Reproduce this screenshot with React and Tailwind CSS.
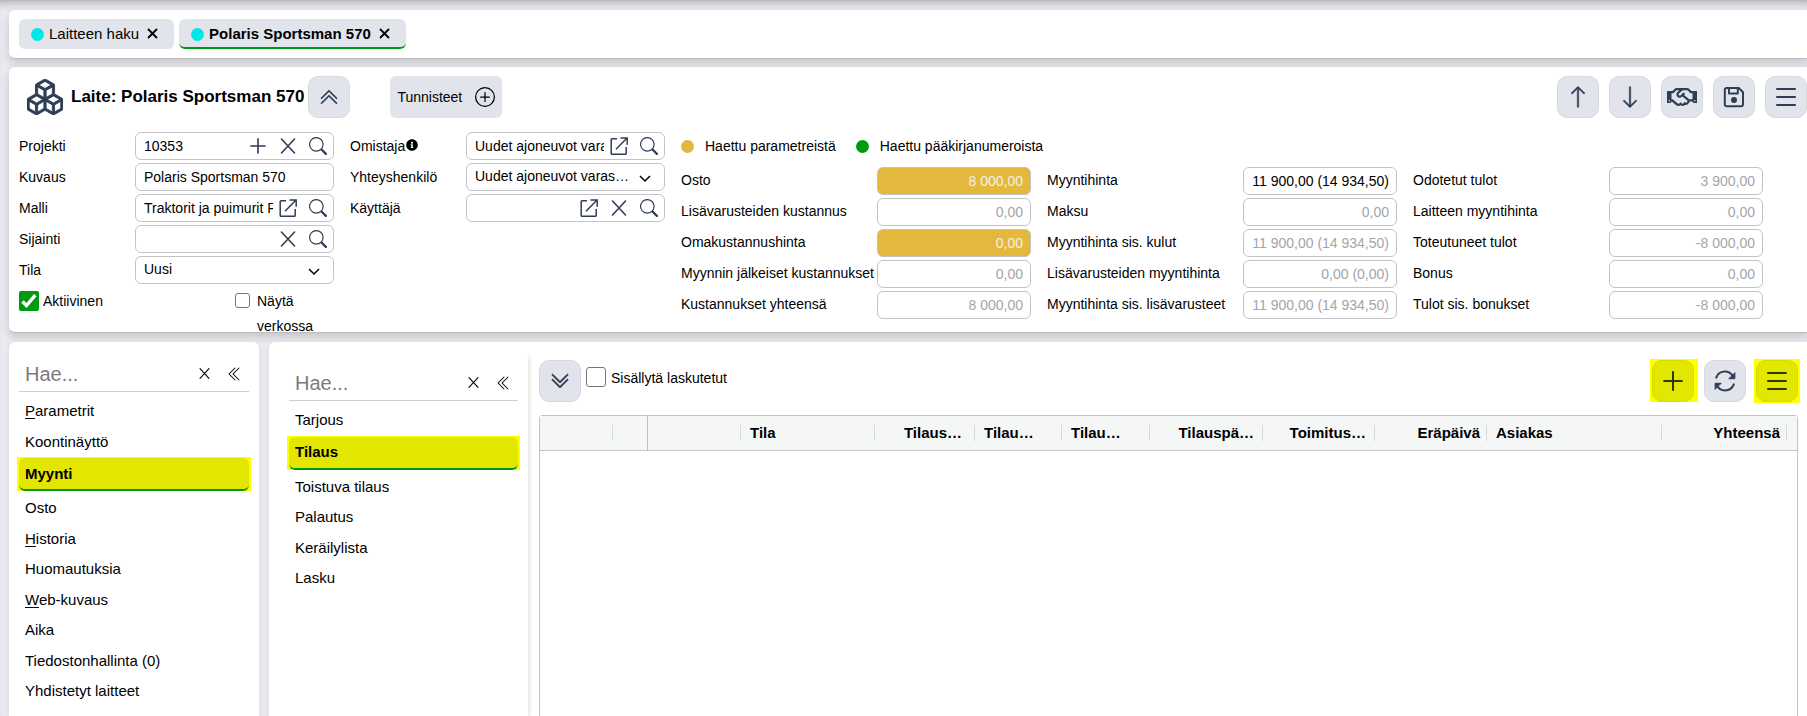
import { useId, useState } from 'react';
import {
  BsBoxes,
  BsChevronDoubleUp,
  BsChevronDoubleDown,
  BsChevronDoubleLeft,
  BsPlusCircle,
  BsArrowUp,
  BsArrowDown,
  BsSearch,
} from 'react-icons/bs';
import { FaInfoCircle, FaRegHandshake } from 'react-icons/fa';

const KUSTANNUKSET = [
  { nimi: 'Osto', arvo: '8 000,00', tyyli: 'parametri' },
  { nimi: 'Lisävarusteiden kustannus', arvo: '0,00' },
  { nimi: 'Omakustannushinta', arvo: '0,00', tyyli: 'parametri' },
  { nimi: 'Myynnin jälkeiset kustannukset', arvo: '0,00' },
  { nimi: 'Kustannukset yhteensä', arvo: '8 000,00' },
];

const MYYNTIHINNAT = [
  { nimi: 'Myyntihinta', arvo: '11 900,00 (14 934,50)', tyyli: 'muokattava' },
  { nimi: 'Maksu', arvo: '0,00' },
  { nimi: 'Myyntihinta sis. kulut', arvo: '11 900,00 (14 934,50)' },
  { nimi: 'Lisävarusteiden myyntihinta', arvo: '0,00 (0,00)' },
  { nimi: 'Myyntihinta sis. lisävarusteet', arvo: '11 900,00 (14 934,50)' },
];

const TULOT = [
  { nimi: 'Odotetut tulot', arvo: '3 900,00' },
  { nimi: 'Laitteen myyntihinta', arvo: '0,00' },
  { nimi: 'Toteutuneet tulot', arvo: '-8 000,00' },
  { nimi: 'Bonus', arvo: '0,00' },
  { nimi: 'Tulot sis. bonukset', arvo: '-8 000,00' },
];

const PAAVALIKKO = [
  { nimi: 'Parametrit', pika: true },
  { nimi: 'Koontinäyttö' },
  { nimi: 'Myynti' },
  { nimi: 'Osto' },
  { nimi: 'Historia', pika: true },
  { nimi: 'Huomautuksia' },
  { nimi: 'Web-kuvaus', pika: true },
  { nimi: 'Aika' },
  { nimi: 'Tiedostonhallinta (0)' },
  { nimi: 'Yhdistetyt laitteet' },
  { nimi: 'Asennetut lisävarusteet' },
];

const MYYNTIVALIKKO = [
  { nimi: 'Tarjous' },
  { nimi: 'Tilaus' },
  { nimi: 'Toistuva tilaus' },
  { nimi: 'Palautus' },
  { nimi: 'Keräilylista' },
  { nimi: 'Lasku' },
];

const SARAKKEET = [
  { nimi: '', leveys: 'w-[73px]' },
  { nimi: '', leveys: 'w-[34px]', kiinnitetty: true },
  { nimi: '', leveys: 'w-[94px]' },
  { nimi: 'Tila', leveys: 'w-[134px]' },
  { nimi: 'Tilaus…', leveys: 'w-[100px]', tasaus: 'justify-end pr-3' },
  { nimi: 'Tilau…', leveys: 'w-[87px]' },
  { nimi: 'Tilau…', leveys: 'w-[88px]' },
  { nimi: 'Tilauspä…', leveys: 'w-[113px]', tasaus: 'justify-end pr-2' },
  { nimi: 'Toimitus…', leveys: 'w-[112px]', tasaus: 'justify-end pr-2' },
  { nimi: 'Eräpäivä', leveys: 'w-[112px]', tasaus: 'justify-end pr-1.5' },
  { nimi: 'Asiakas', leveys: 'w-[175px]' },
  { nimi: 'Yhteensä', leveys: 'w-[125px]', tasaus: 'justify-end pr-1.5' },
];

function RuksiIcon({ className }) {
  return (
    <svg className={className} viewBox="0 0 16 16" fill="none" stroke="currentColor" strokeWidth="1.6" strokeLinecap="round">
      <path d="M1.5 1l13 14M14.5 1l-13 14" />
    </svg>
  );
}

function PlusIcon({ className }) {
  return (
    <svg className={className} viewBox="0 0 18 18" fill="none" stroke="currentColor" strokeWidth="1.8" strokeLinecap="round">
      <path d="M9 1v16M1 9h16" />
    </svg>
  );
}

function AvaaIcon({ className }) {
  return (
    <svg className={className} viewBox="0 0 18 18" fill="none" stroke="currentColor" strokeWidth="1.5">
      <path d="M7 1.7H2.2a1 1 0 0 0-1 1v13.6a1 1 0 0 0 1 1h13a1 1 0 0 0 1-1V10" />
      <path d="M6 12.3L16.8 1.2M10.5 1h6.7v6.7" />
    </svg>
  );
}

function ValikkoIcon({ className }) {
  return (
    <svg className={className} viewBox="0 0 20 18" fill="none" stroke="currentColor" strokeWidth="2" strokeLinecap="round">
      <path d="M1 1h18M1 9h18M1 17h18" />
    </svg>
  );
}

function TallennaIcon({ className }) {
  return (
    <svg className={className} viewBox="0 0 22 22" fill="none" stroke="currentColor" strokeWidth="2" strokeLinejoin="round">
      <path d="M3.5 2h12.3L20 6.2v12.3a1.7 1.7 0 0 1-1.7 1.7H3.5a1.7 1.7 0 0 1-1.7-1.7V3.7A1.7 1.7 0 0 1 3.5 2z" />
      <path d="M6 2v5.6h8.8V2" />
      <circle cx="11" cy="14" r="3" fill="currentColor" stroke="none" />
    </svg>
  );
}

function PaivitaIcon({ className }) {
  return (
    <svg className={className} viewBox="0 0 22 22" fill="none" stroke="currentColor" strokeWidth="2" strokeLinecap="round">
      <path d="M2.2 7.6C3.6 3.9 6.9 1.5 11 1.5c3.5 0 6.2 1.8 8 4.7" />
      <path d="M19.8 14.4C18.4 18.1 15.1 20.5 11 20.5c-3.5 0-6.2-1.8-8-4.7" />
      <path d="M20.9 3v5.7h-5.7z" fill="currentColor" strokeWidth="1" strokeLinejoin="round" />
      <path d="M1.1 19v-5.7h5.7z" fill="currentColor" strokeWidth="1" strokeLinejoin="round" />
    </svg>
  );
}

function NuoliAlas({ className }) {
  return (
    <svg className={className} viewBox="0 0 12 8" fill="none" stroke="currentColor" strokeWidth="1.5">
      <path d="M1 1l5 5 5-5" />
    </svg>
  );
}

function Nappi({ nimi, children, keltainen }) {
  return (
    <button
      type="button"
      aria-label={nimi}
      className={`size-[42px] shrink-0 flex items-center justify-center rounded-[10px] border ${
        keltainen ? 'bg-[#e2e600] border-[#d8dc00] text-[#2c3a00]' : 'bg-[#e2e4ec] border-[#d8d9dd] text-[#2f3d55]'
      }`}
    >
      {children}
    </button>
  );
}

function Valilehti({ nimi, aktiivinen }) {
  return (
    <div
      className={`h-[30px] flex items-center rounded-md bg-[#e2e4ec] pl-3 pr-4 pt-0.5 text-[15px] border-b-2 ${
        aktiivinen ? 'border-[#009a10] font-bold' : 'border-transparent'
      }`}
    >
      <span className="size-[13px] rounded-full bg-[#00e7ea] mr-[5px]" />
      <a href="#">{nimi}</a>
      <button type="button" aria-label={`Sulje ${nimi}`} className="ml-2 pb-0.5 text-black">
        <svg className="size-[11px]" viewBox="0 0 11 11" fill="none" stroke="currentColor" strokeWidth="1.8">
          <path d="M1 1l9 9M10 1l-9 9" />
        </svg>
      </button>
    </div>
  );
}

function KenttaIcon({ tyyppi }) {
  const iconit = {
    lisaa: <PlusIcon className="size-4" />,
    tyhjenna: <RuksiIcon className="size-4" />,
    avaa: <AvaaIcon className="size-[18px]" />,
    hae: <BsSearch className="size-[18px]" />,
  };
  return (
    <button type="button" aria-label={tyyppi} className="w-[30px] h-full shrink-0 flex items-center justify-center text-[#2f3d55]">
      {iconit[tyyppi]}
    </button>
  );
}

function Kentta({ nimi, arvo = '', iconit = [], info }) {
  const id = useId();
  return (
    <div className="flex items-center h-7">
      <label htmlFor={id} className="w-[116px] shrink-0 flex items-center">
        {nimi}
        {info && <FaInfoCircle className="size-3 mb-0.5 ml-px text-black" />}
      </label>
      <div className="flex-1 min-w-0 h-7 flex items-center border border-[#c3c3c6] rounded-md">
        <input id={id} type="text" defaultValue={arvo} className="flex-1 min-w-0 h-full ml-2 outline-none bg-transparent" />
        {iconit.map(i => <KenttaIcon key={i} tyyppi={i} />)}
      </div>
    </div>
  );
}

function Valinta({ nimi, arvo }) {
  const id = useId();
  return (
    <div className="flex items-center h-7">
      <label htmlFor={id} className="w-[116px] shrink-0">{nimi}</label>
      <div className="relative flex-1 min-w-0">
        <select id={id} className="w-full h-7 appearance-none border border-[#c3c3c6] rounded-md pl-2 pr-9 pb-0.5 bg-white outline-none">
          <option>{arvo}</option>
        </select>
        <NuoliAlas className="absolute right-3.5 top-3 w-3 h-2 pointer-events-none" />
      </div>
    </div>
  );
}

function Summa({ nimi, arvo, tyyli }) {
  const id = useId();
  let vari = 'bg-white text-[#a3a5aa]';
  if (tyyli === 'parametri') vari = 'bg-[#e3b83c] text-[#f3f1ea]';
  if (tyyli === 'muokattava') vari = 'bg-white text-black';
  return (
    <div className="flex items-center h-7">
      <label htmlFor={id} className="w-[196px] shrink-0 whitespace-nowrap pb-0.5">{nimi}</label>
      <input
        id={id}
        type="text"
        readOnly
        value={arvo}
        className={`flex-1 min-w-0 h-7 border border-[#c3c3c6] rounded-md px-[7px] text-right outline-none ${vari}`}
      />
    </div>
  );
}

function Valikko({ kohdat, valittu, onValitse }) {
  return (
    <div>
      <div className="h-10 flex items-center border-b border-[#cfcfd1] px-1.5 pt-1">
        <input type="text" placeholder="Hae..." aria-label="Hae" className="flex-1 min-w-0 text-xl placeholder:text-[#7b7b7b] outline-none" />
        <button type="button" aria-label="Tyhjennä haku" className="mr-[17px]">
          <RuksiIcon className="size-[11px]" />
        </button>
        <button type="button" aria-label="Piilota valikko">
          <BsChevronDoubleLeft className="size-4" />
        </button>
      </div>
      <ul className="pt-1 text-[15px]">
        {kohdat.map(({ nimi, pika }) => (
          <li key={nimi}>
            {nimi === valittu ? (
              <div className="bg-[#ffff00] -mx-0.5 px-0.5 pt-px mb-0.5">
                <a href="#" className="h-[33px] flex items-center rounded-md bg-[#e2e600] border-b-2 border-[#009a10] px-1.5 font-bold">{nimi}</a>
              </div>
            ) : (
              <a href="#" onClick={() => onValitse(nimi)} className="block px-1.5 py-1 leading-normal whitespace-nowrap">
                {pika ? <><span className="underline underline-offset-2">{nimi[0]}</span>{nimi.slice(1)}</> : nimi}
              </a>
            )}
          </li>
        ))}
      </ul>
    </div>
  );
}

function App() {
  const [sivu, setSivu] = useState('Myynti');
  const [alasivu, setAlasivu] = useState('Tilaus');

  return (
    <div className="h-screen overflow-hidden flex flex-col bg-[#eaebf0] pl-[9px] font-['Liberation_Sans',Arial,sans-serif] text-sm text-black border-t border-[#b9bac0] shadow-[inset_0_8px_8px_-6px_rgba(0,0,0,0.25)]">

      {/* VÄLILEHDET */}
      <nav className="mt-[9px] h-[49px] shrink-0 flex items-start gap-[5px] pt-[9px] pl-2.5 bg-white rounded-l-md border-b border-[#bcbdc2] shadow-[0_4px_8px_rgba(0,0,0,0.16)]">
        <Valilehti nimi="Laitteen haku" />
        <Valilehti nimi="Polaris Sportsman 570" aktiivinen />
      </nav>

      {/* LAITTEEN TIEDOT */}
      <section className="mt-2 h-[266px] shrink-0 overflow-hidden bg-white rounded-l-md border-b border-[#bcbdc2] shadow-[0_4px_8px_rgba(0,0,0,0.16)]">
        <header className="flex items-center pt-[9px] pl-[18px]">
          <BsBoxes className="size-9 text-[#2f3d55]" stroke="currentColor" strokeWidth="0.4" />
          <h1 className="text-[17px] font-bold ml-2 mr-1">Laite: Polaris Sportsman 570</h1>
          <Nappi nimi="Piilota tiedot"><BsChevronDoubleUp className="size-5" stroke="currentColor" strokeWidth="0.3" /></Nappi>
          <button type="button" className="ml-10 h-[42px] flex items-center gap-[13px] rounded-md bg-[#e2e4ec] pl-[7px] pr-[7px]">
            Tunnisteet
            <BsPlusCircle className="size-5" />
          </button>
          <div className="ml-auto flex gap-2.5">
            <Nappi nimi="Edellinen"><BsArrowUp className="size-6" stroke="currentColor" strokeWidth="0.3" /></Nappi>
            <Nappi nimi="Seuraava"><BsArrowDown className="size-6" stroke="currentColor" strokeWidth="0.3" /></Nappi>
            <Nappi nimi="Kauppa"><FaRegHandshake className="size-[30px]" /></Nappi>
            <Nappi nimi="Tallenna"><TallennaIcon className="size-[22px]" /></Nappi>
            <Nappi nimi="Valikko"><ValikkoIcon className="w-5 h-[18px]" /></Nappi>
          </div>
        </header>

        <div className="grid grid-cols-[minmax(0,315fr)_minmax(0,315fr)_minmax(0,1082fr)] gap-x-4 pl-2.5 pr-11 pt-3.5">
          <div className="flex flex-col gap-[3px]">
            <Kentta nimi="Projekti" arvo="10353" iconit={['lisaa', 'tyhjenna', 'hae']} />
            <Kentta nimi="Kuvaus" arvo="Polaris Sportsman 570" />
            <Kentta nimi="Malli" arvo="Traktorit ja puimurit Polaris" iconit={['avaa', 'hae']} />
            <Kentta nimi="Sijainti" iconit={['tyhjenna', 'hae']} />
            <Valinta nimi="Tila" arvo="Uusi" />
            <div className="flex items-start pt-1">
              <label className="flex items-center gap-1">
                <span className="relative size-5">
                  <input type="checkbox" defaultChecked className="block size-5 appearance-none rounded-xs bg-[#009a10]" />
                  <svg className="absolute inset-0 size-5 pointer-events-none" viewBox="0 0 20 20" fill="none" stroke="#fff" strokeWidth="3.4">
                    <path d="M3.5 10.5l4 4L16.3 4.2" />
                  </svg>
                </span>
                Aktiivinen
              </label>
              <label className="ml-auto w-[99px] flex items-start gap-[7px] leading-[25px]">
                <input type="checkbox" className="mt-0.5 size-[15px] shrink-0 appearance-none rounded-[3px] border border-[#76767a]" />
                <span className="-mt-0.5">Näytä verkossa</span>
              </label>
            </div>
          </div>

          <div className="flex flex-col gap-[3px]">
            <Kentta nimi="Omistaja" arvo="Uudet ajoneuvot varasto" iconit={['avaa', 'hae']} info />
            <Valinta nimi="Yhteyshenkilö" arvo="Uudet ajoneuvot varas…" />
            <Kentta nimi="Käyttäjä" iconit={['avaa', 'tyhjenna', 'hae']} />
          </div>

          <div>
            <div className="h-7 flex items-center">
              <span className="size-[13px] rounded-full bg-[#e3b83c] mr-[11px]" />
              Haettu parametreistä
              <span className="size-[13px] rounded-full bg-[#009a10] ml-5 mr-[11px]" />
              Haettu pääkirjanumeroista
            </div>
            <div className="grid grid-cols-3 gap-x-4 pt-[7px]">
              {[KUSTANNUKSET, MYYNTIHINNAT, TULOT].map((ryhma, i) => (
                <div key={i} className="flex flex-col gap-[3px]">
                  {ryhma.map(r => <Summa key={r.nimi} {...r} />)}
                </div>
              ))}
            </div>
          </div>
        </div>
      </section>

      {/* ALAOSA */}
      <main className="flex-1 min-h-0 flex gap-2.5 pt-[9px]">
        <aside className="w-[250px] shrink-0 overflow-hidden bg-white rounded-t-md px-2.5 pt-2.5 shadow-[0_2px_6px_rgba(0,0,0,0.08)]">
          <Valikko kohdat={PAAVALIKKO} valittu={sivu} onValitse={setSivu} />
        </aside>

        <div className="flex-1 min-w-0 flex bg-white rounded-tl-md shadow-[0_2px_6px_rgba(0,0,0,0.08)]">
          <aside className="w-[249px] shrink-0 ml-2.5 mt-[9px] px-2.5 pt-2.5 rounded-t-md shadow-[3px_3px_5px_-2px_rgba(0,0,0,0.14)]">
            <Valikko kohdat={MYYNTIVALIKKO} valittu={alasivu} onValitse={setAlasivu} />
          </aside>

          <section className="flex-1 min-w-0 flex flex-col pl-[11px] pr-[9px] pt-[17px]">
            <div className="flex items-start">
              <div className="flex pt-px">
                <Nappi nimi="Näytä suodattimet"><BsChevronDoubleDown className="size-5" stroke="currentColor" strokeWidth="0.6" /></Nappi>
                <label className="flex items-center gap-[5px] h-5 mt-[7px] ml-[5px]">
                  <input type="checkbox" className="size-5 appearance-none rounded-[3px] border border-[#76767a]" />
                  <span className="pt-0.5">Sisällytä laskutetut</span>
                </label>
              </div>
              <div className="ml-auto -mr-0.5 flex items-start">
                <div className="bg-[#ffff00] pt-px pl-0.5 pr-1">
                  <Nappi nimi="Lisää tilaus" keltainen><PlusIcon className="size-5" /></Nappi>
                </div>
                <div className="pt-px pl-1.5 pr-2">
                  <Nappi nimi="Päivitä"><PaivitaIcon className="size-[22px]" /></Nappi>
                </div>
                <div className="bg-[#ffff00] py-px px-0.5">
                  <Nappi nimi="Toiminnot" keltainen><ValikkoIcon className="w-5 h-[18px]" /></Nappi>
                </div>
              </div>
            </div>

            <div className="mt-3 flex-1 border border-b-0 border-[#bdc3c7] rounded-t-sm">
              <table className="w-full table-fixed border-collapse">
                <thead>
                  <tr className="h-[34px] bg-[#f5f7f7] border-b border-[#bdc3c7] text-[15px]">
                    {SARAKKEET.map((s, i) => (
                      <th key={i} className={`p-0 ${s.leveys} ${s.kiinnitetty ? 'border-r border-[#bdc3c7]' : ''}`}>
                        <div className={`h-4 flex items-center whitespace-nowrap ${s.kiinnitetty ? '' : 'border-r border-[#d5d8dc]'} ${s.tasaus || 'pl-[9px]'}`}>
                          {s.nimi}
                        </div>
                      </th>
                    ))}
                    <th className="p-0" />
                  </tr>
                </thead>
                <tbody />
              </table>
            </div>
          </section>
        </div>
      </main>
    </div>
  );
}

export default App;
